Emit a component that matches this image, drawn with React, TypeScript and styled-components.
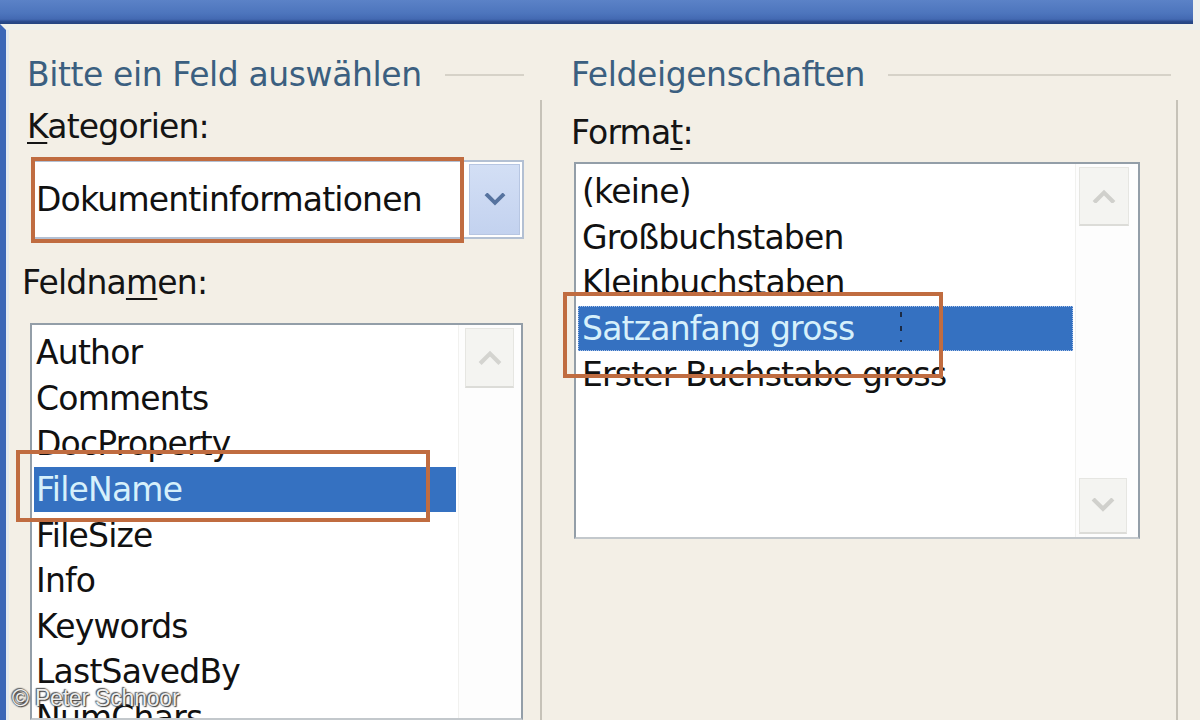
import React from "react";
import styled, { createGlobalStyle } from "styled-components";

const Global = createGlobalStyle`
  html, body { margin: 0; padding: 0; background: #f3efe6; overflow: hidden; }
  #root { width: 1200px; height: 720px; }
`;

const Window = styled.div`
  position: relative;
  width: 1200px;
  height: 720px;
  display: flex;
  flex-direction: column;
  background: #f3efe6;
  overflow: hidden;
  font-family: "DejaVu Sans", "Liberation Sans", sans-serif;
`;

const TitleRow = styled.div`
  display: flex;
  height: 24px;
  flex: 0 0 24px;
`;

const TitleBar = styled.div`
  width: 1193px;
  height: 24px;
  background: linear-gradient(180deg, #5b82c7 0%, #4d75bd 55%, #4369b2 80%, #284a8c 90%, #23437f 100%);
`;

const TitleEdge = styled.div`
  flex: 1;
  background: #eef0ee;
`;

const Body = styled.div`
  flex: 1;
  display: flex;
  border-left: 6px solid #3b66b7;
  box-shadow: inset 3px 0 0 #e4e9ef;
  border-top: 6px solid #eef0ec;
  padding-top: 28px;
  min-height: 0;
`;

const Group = styled.section<{ $width: number }>`
  width: ${(p) => p.$width}px;
  flex: 0 0 ${(p) => p.$width}px;
  display: flex;
  flex-direction: column;
  min-height: 0;
`;

const GroupHeader = styled.div<{ $indent: number; $lineEnd: number }>`
  display: flex;
  align-items: center;
  height: 34px;
  padding-left: ${(p) => p.$indent}px;
  padding-right: ${(p) => p.$lineEnd}px;
`;

const GroupTitle = styled.span`
  font-size: 33px;
  letter-spacing: -0.4px;
  color: #3b5f80;
  white-space: nowrap;
  line-height: 34px;
`;

const GroupLine = styled.div`
  flex: 1;
  height: 2px;
  margin-left: 23px;
  background: #d6d2c8;
`;

const GroupBody = styled.div`
  flex: 1;
  display: flex;
  flex-direction: column;
  margin-top: 8px;
  border-right: 2px solid #c6c2b8;
  min-height: 0;
`;

const FieldLabel = styled.div<{ $indent: number; $top: number }>`
  font-size: 33px;
  letter-spacing: -0.8px;
  color: #141414;
  line-height: 36px;
  height: 36px;
  margin-top: ${(p) => p.$top}px;
  padding-left: ${(p) => p.$indent}px;
  white-space: nowrap;
`;

const Mnemonic = styled.span`
  text-decoration: underline;
  text-underline-offset: 4px;
  text-decoration-thickness: 2px;
`;

const ComboBox = styled.div`
  position: relative;
  display: flex;
  margin: 15px 16px 0 26px;
  height: 79px;
  box-sizing: border-box;
  border: 2px solid #b3c0d3;
  background: #ffffff;
  padding: 2px 2px 2px 0;
`;

const ComboText = styled.div`
  flex: 1;
  display: flex;
  align-items: center;
  padding-left: 2px;
  font-size: 33px;
  letter-spacing: -0.8px;
  color: #111;
  white-space: nowrap;
`;

const ComboButton = styled.div`
  width: 51px;
  display: flex;
  align-items: center;
  justify-content: center;
  background: linear-gradient(180deg, #d3dff5 0%, #c3d2ef 100%);
  border: 1px solid #b7c6e2;
  box-sizing: border-box;
`;

const Highlight = styled.div<{ $l: number; $t: number; $w: number; $h: number }>`
  position: absolute;
  left: ${(p) => p.$l}px;
  top: ${(p) => p.$t}px;
  width: ${(p) => p.$w}px;
  height: ${(p) => p.$h}px;
  box-sizing: border-box;
  border: 4px solid #c06c40;
  pointer-events: none;
  z-index: 2;
`;

const ListBox = styled.div<{ $left: number; $right: number; $top: number; $height?: number }>`
  position: relative;
  display: flex;
  margin: ${(p) => p.$top}px ${(p) => p.$right}px 0 ${(p) => p.$left}px;
  ${(p) => (p.$height ? `height: ${p.$height}px; flex: 0 0 ${p.$height}px;` : `flex: 1;`)}
  box-sizing: border-box;
  border: 2px solid #939ea8;
  border-bottom-color: #c3c8cc;
  background: #ffffff;
  min-height: 0;
`;

const Items = styled.div`
  flex: 1;
  display: flex;
  flex-direction: column;
  padding-top: 5px;
  min-width: 0;
  overflow: hidden;
`;

const Item = styled.div<{ $selected?: boolean; $focus?: boolean; $pad: number }>`
  position: relative;
  height: 45.6px;
  flex: 0 0 45.6px;
  display: flex;
  align-items: center;
  margin: 0 2px;
  padding-left: ${(p) => p.$pad}px;
  font-size: 33px;
  letter-spacing: -0.8px;
  white-space: nowrap;
  color: ${(p) => (p.$selected ? "#d6f0fb" : "#111111")};
  background: ${(p) => (p.$selected ? "#3571c1" : "transparent")};
  outline: ${(p) => (p.$focus ? "1px dotted #a9c3ea" : "none")};
  outline-offset: -1px;
`;

const Caret = styled.span<{ $x: number }>`
  position: absolute;
  left: ${(p) => p.$x}px;
  top: 6px;
  width: 2px;
  height: 30px;
  background: repeating-linear-gradient(180deg, #1b2a44 0 5px, transparent 5px 14px);
`;

const ScrollTrack = styled.div<{ $width: number; $inset: number }>`
  width: ${(p) => p.$width}px;
  flex: 0 0 ${(p) => p.$width}px;
  display: flex;
  flex-direction: column;
  justify-content: space-between;
  padding: 3px 0 3px ${(p) => p.$inset}px;
  box-sizing: border-box;
  border-left: 1px solid #f1f1ef;
  background: #fdfdfd;
`;

const ScrollButton = styled.div<{ $w: number; $h: number }>`
  width: ${(p) => p.$w}px;
  height: ${(p) => p.$h}px;
  box-sizing: border-box;
  display: flex;
  align-items: center;
  justify-content: center;
  background: #f4f4f1;
  border: 1px solid #e6e6e2;
  border-bottom: 2px solid #dcdcd8;
`;

const Watermark = styled.div`
  position: absolute;
  left: 12px;
  bottom: 8px;
  font-family: "Liberation Sans", Arial, sans-serif;
  font-size: 23px;
  letter-spacing: -0.2px;
  color: rgba(255, 255, 255, 0.92);
  text-shadow: 0 0 2px #333, 1px 1px 1px #444, -1px -1px 1px #666;
  z-index: 5;
`;

const Chevron: React.FC<{ up?: boolean; color: string; w: number }> = ({ up, color, w }) => (
  <svg width={w} height={w * 0.6} viewBox="0 0 20 12">
    <polyline
      points={up ? "3,10 10,3 17,10" : "3,2 10,9 17,2"}
      fill="none"
      stroke={color}
      strokeWidth={3.5}
      strokeLinecap="square"
    />
  </svg>
);

const fieldNames = [
  "Author",
  "Comments",
  "DocProperty",
  "FileName",
  "FileSize",
  "Info",
  "Keywords",
  "LastSavedBy",
  "NumChars",
  "NumPages",
];

const formats = ["(keine)", "Großbuchstaben", "Kleinbuchstaben", "Satzanfang gross", "Erster Buchstabe gross"];

export default function App() {
  return (
    <Window>
      <Global />
      <TitleRow>
        <TitleBar />
        <TitleEdge />
      </TitleRow>
      <Body>
        <Group $width={536}>
          <GroupHeader $indent={21} $lineEnd={18}>
            <GroupTitle>Bitte ein Feld auswählen</GroupTitle>
            <GroupLine />
          </GroupHeader>
          <GroupBody>
            <FieldLabel $indent={21} $top={9}>
              <Mnemonic>K</Mnemonic>ategorien:
            </FieldLabel>
            <ComboBox>
              <ComboText>Dokumentinformationen</ComboText>
              <ComboButton>
                <Chevron color="#56739f" w={22} />
              </ComboButton>
              <Highlight $l={-3} $t={-5} $w={433} $h={86} />
            </ComboBox>
            <FieldLabel $indent={16} $top={26}>
              Feldna<Mnemonic>m</Mnemonic>en:
            </FieldLabel>
            <ListBox $left={24} $right={17} $top={22}>
              <Items>
                {fieldNames.map((n, i) => (
                  <Item key={n} $pad={2} $selected={i === 3}>
                    {n}
                  </Item>
                ))}
              </Items>
              <ScrollTrack $width={63} $inset={6}>
                <ScrollButton $w={49} $h={60}>
                  <Chevron up color="#d4d4d0" w={24} />
                </ScrollButton>
              </ScrollTrack>
            </ListBox>
          </GroupBody>
        </Group>
        <Group $width={636}>
          <GroupHeader $indent={29} $lineEnd={7}>
            <GroupTitle>Feldeigenschaften</GroupTitle>
            <GroupLine />
          </GroupHeader>
          <GroupBody>
            <FieldLabel $indent={29} $top={15}>
              Forma<Mnemonic>t</Mnemonic>:
            </FieldLabel>
            <ListBox $left={32} $right={36} $top={11} $height={377}>
              <Items>
                {formats.map((f, i) => (
                  <Item key={f} $pad={4} $selected={i === 3} $focus={i === 3}>
                    {f}
                    {i === 3 && <Caret $x={322} />}
                  </Item>
                ))}
              </Items>
              <ScrollTrack $width={63} $inset={3}>
                <ScrollButton $w={50} $h={59}>
                  <Chevron up color="#d0d0cc" w={24} />
                </ScrollButton>
                <ScrollButton $w={48} $h={56}>
                  <Chevron color="#d0d0cc" w={24} />
                </ScrollButton>
              </ScrollTrack>
              <Highlight $l={-13} $t={128} $w={380} $h={86} />
            </ListBox>
          </GroupBody>
        </Group>
      </Body>
      <Highlight $l={16} $t={450} $w={414} $h={72} />
      <Watermark>© Peter Schnoor</Watermark>
    </Window>
  );
}
